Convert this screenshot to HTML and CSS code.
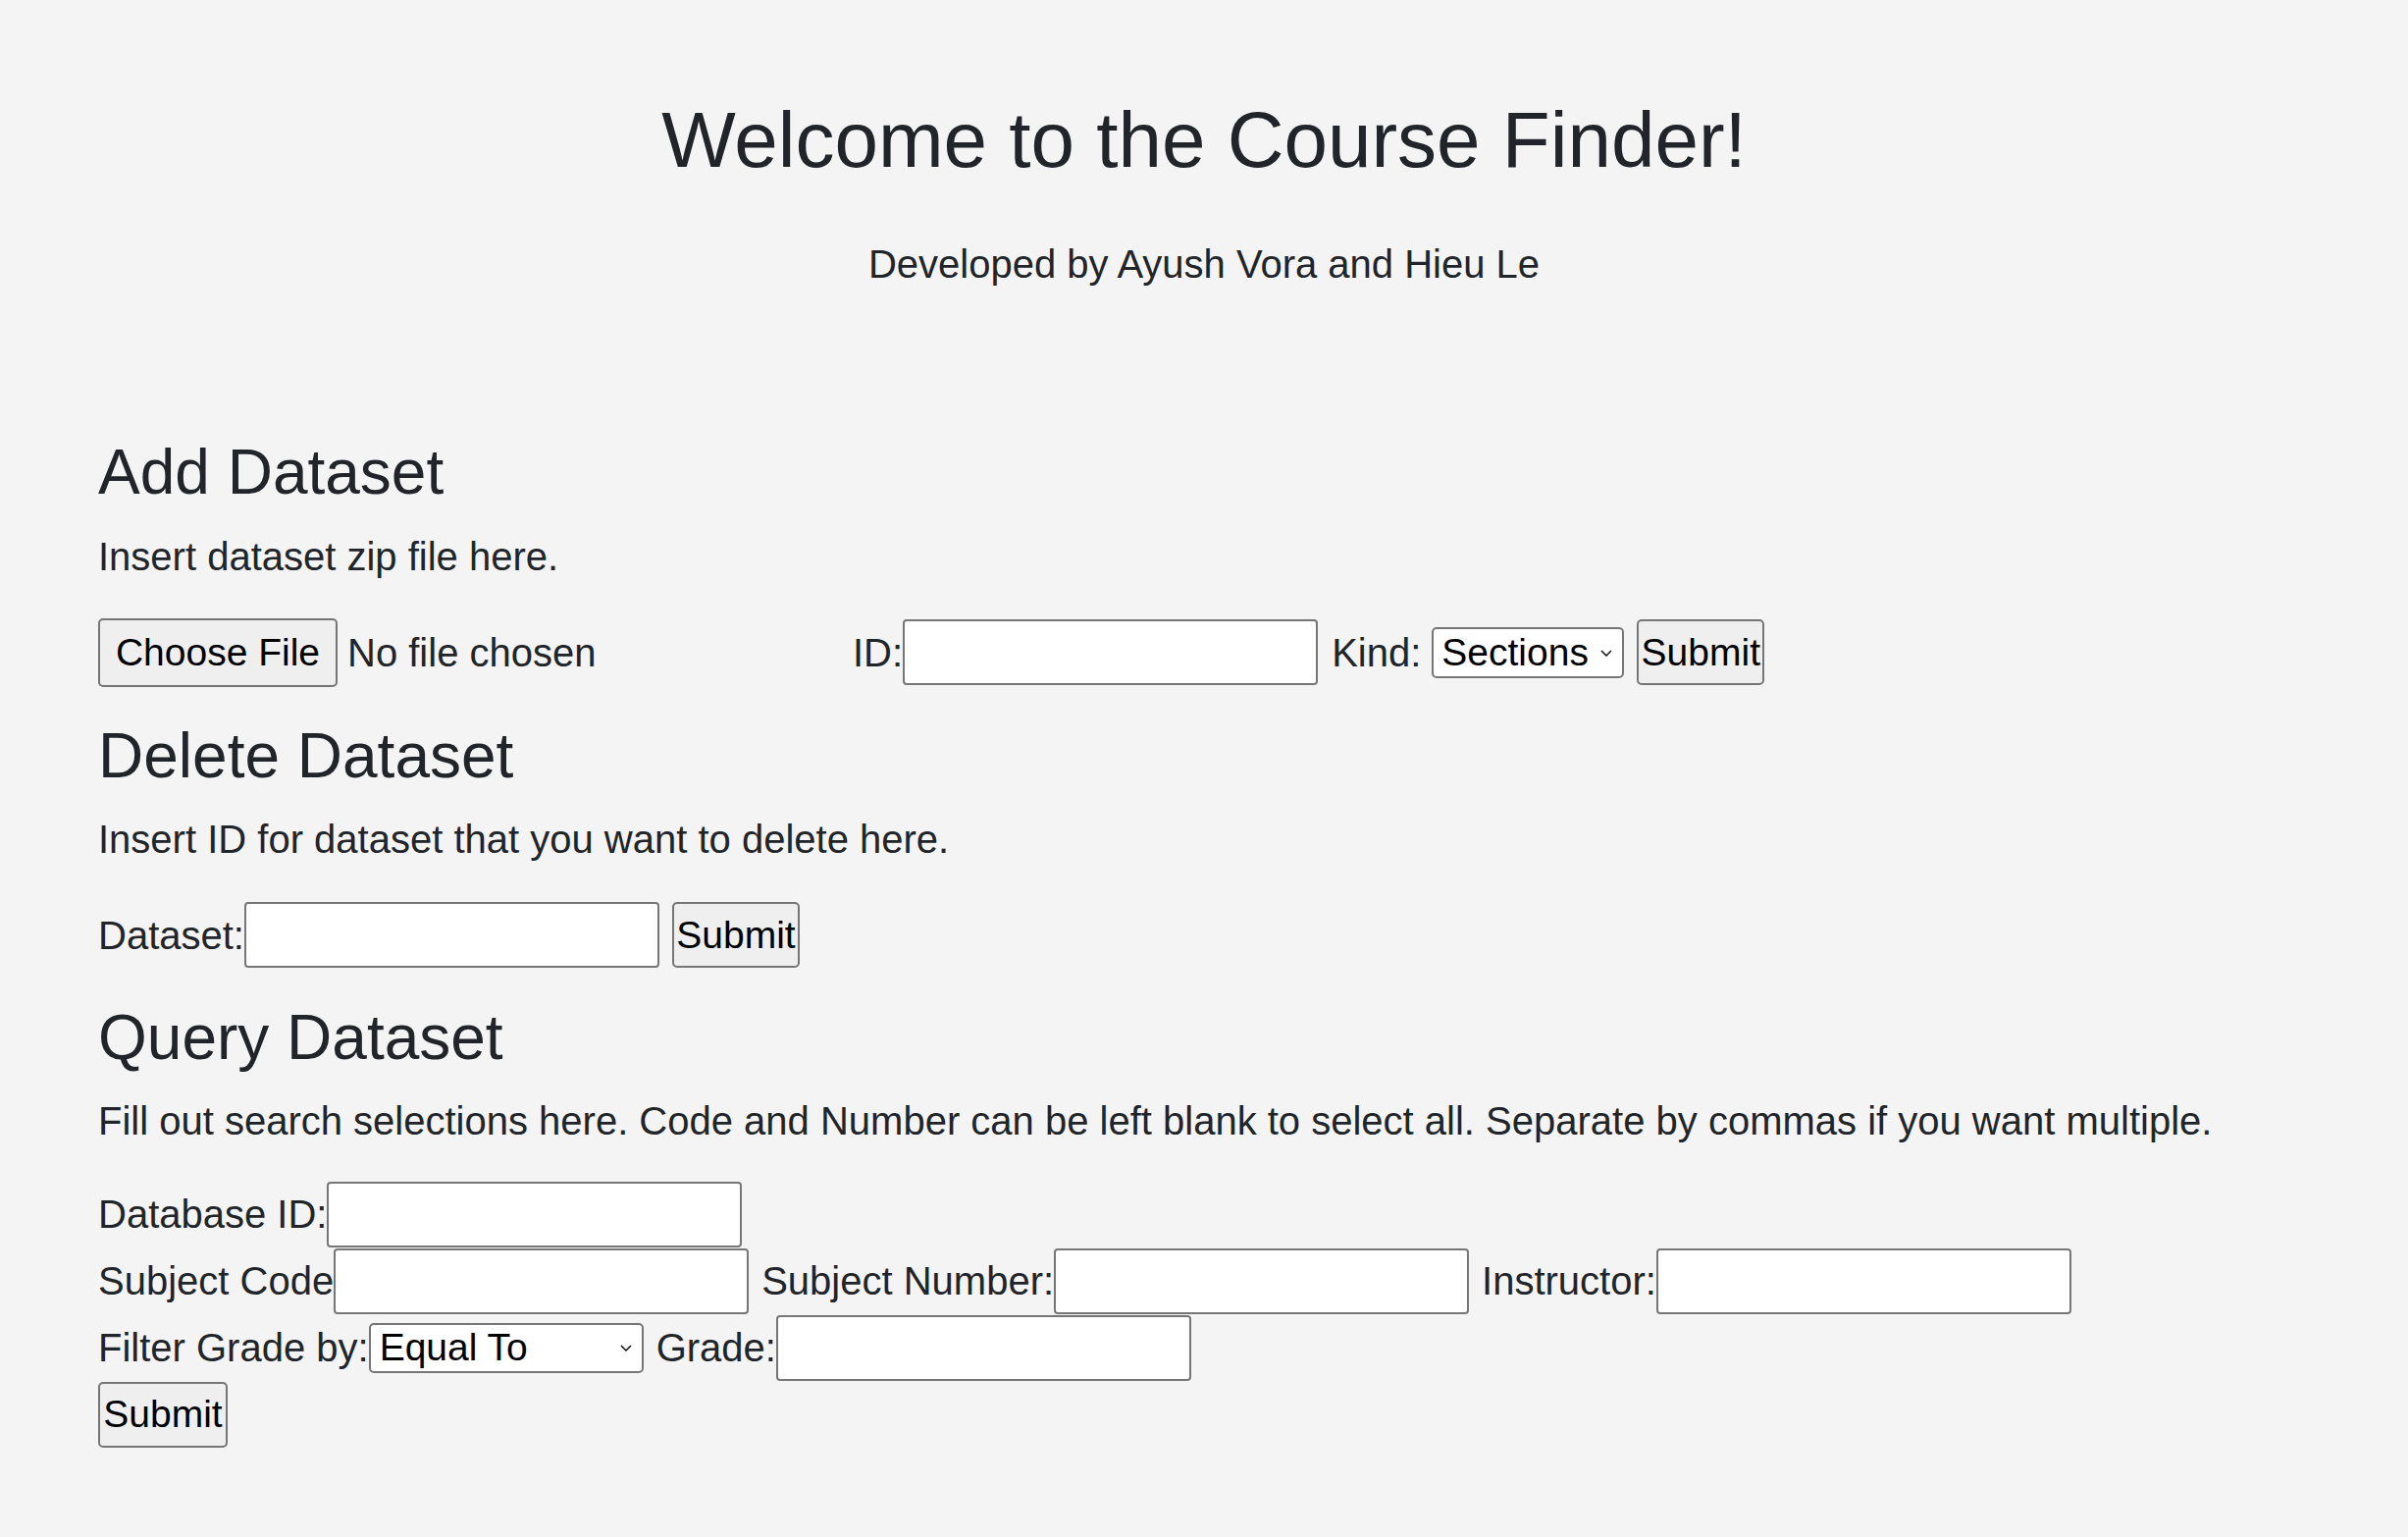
FILE: index.html
```html
<!DOCTYPE html>
<html lang="en">
<head>
<meta charset="utf-8">
<title>Course Finder</title>
<link rel="stylesheet" href="styles.css">
</head>
<body>
<header class="hero">
  <h1 class="title">Welcome to the Course Finder!</h1>
  <p class="subtitle">Developed by Ayush Vora and Hieu Le</p>
</header>
<main class="content">
  <section class="panel panel-first">
    <h2 class="panel-title">Add Dataset</h2>
    <p class="panel-desc">Insert dataset zip file here.</p>
    <form class="row">
      <div class="file-field">
        <button type="button" class="btn btn-file">Choose File</button>
        <span class="file-name">No file chosen</span>
      </div>
      <label class="lbl">ID:</label>
      <input class="txt" type="text">
      <label class="lbl lbl-gap">Kind:</label>
      <span class="select-wrap sel-kind">
        <select class="sel"><option>Sections</option><option>Rooms</option></select>
        <svg class="chev" viewBox="0 0 12 7" width="12" height="7"><polyline points="1,1 6,6 11,1" fill="none" stroke="#000" stroke-width="1.4"/></svg>
      </span>
      <button type="button" class="btn btn-submit btn-after">Submit</button>
    </form>
  </section>

  <section class="panel">
    <h2 class="panel-title">Delete Dataset</h2>
    <p class="panel-desc">Insert ID for dataset that you want to delete here.</p>
    <form class="row">
      <label class="lbl">Dataset:</label>
      <input class="txt" type="text">
      <button type="button" class="btn btn-submit btn-after">Submit</button>
    </form>
  </section>

  <section class="panel panel-last">
    <h2 class="panel-title">Query Dataset</h2>
    <p class="panel-desc">Fill out search selections here. Code and Number can be left blank to select all. Separate by commas if you want multiple.</p>
    <form class="query">
      <div class="qrow">
        <label class="lbl">Database ID:</label>
        <input class="txt" type="text">
      </div>
      <div class="qrow">
        <label class="lbl">Subject Code</label>
        <input class="txt" type="text">
        <label class="lbl lbl-next">Subject Number:</label>
        <input class="txt" type="text">
        <label class="lbl lbl-next">Instructor:</label>
        <input class="txt" type="text">
      </div>
      <div class="qrow">
        <label class="lbl">Filter Grade by:</label>
        <span class="select-wrap sel-filter">
          <select class="sel"><option>Equal To</option><option>Greater Than</option><option>Less Than</option></select>
          <svg class="chev" viewBox="0 0 12 7" width="12" height="7"><polyline points="1,1 6,6 11,1" fill="none" stroke="#000" stroke-width="1.4"/></svg>
        </span>
        <label class="lbl lbl-next">Grade:</label>
        <input class="txt" type="text">
      </div>
      <div class="qrow">
        <button type="button" class="btn btn-submit btn-query">Submit</button>
      </div>
    </form>
  </section>
</main>
</body>
</html>
```

FILE: styles.css
```css
html, body {
  margin: 0;
  padding: 0;
  background: #f4f4f4;
}

body {
  font-family: "Liberation Sans", Arial, Helvetica, sans-serif;
  font-size: 40px;
  line-height: 48px;
  color: #212529;
  padding: 0 100px;
}

.hero {
  text-align: center;
}

.title {
  margin: 95px 0 0;
  font-size: 80px;
  line-height: 96px;
  font-weight: 400;
}

.subtitle {
  margin: 54px 0 0;
  font-size: 40px;
  line-height: 48px;
}

.content {
  display: flex;
  flex-direction: column;
}

.panel-title {
  margin: 32px 0 0;
  font-size: 64px;
  line-height: 77px;
  font-weight: 400;
}

.panel-first .panel-title {
  margin-top: 150px;
}

.panel-last .panel-title {
  margin-top: 31px;
}

.panel-desc {
  margin: 22px 0 0;
  line-height: 48px;
}

.panel-first .panel-desc {
  margin-top: 23px;
}

.row {
  display: flex;
  align-items: center;
  height: 71px;
  margin: 38px 0 0;
}

.query {
  margin: 37px 0 0;
  display: flex;
  flex-direction: column;
}

.qrow {
  display: flex;
  align-items: center;
  height: 68px;
}

.lbl {
  white-space: pre;
  line-height: 48px;
}

.lbl-gap {
  margin-left: 14px;
  margin-right: 11px;
}

.lbl-next {
  margin-left: 13px;
}

.file-field {
  display: flex;
  align-items: center;
  width: 769px;
  flex: none;
}

.file-name {
  margin-left: 10px;
  white-space: nowrap;
}

.btn {
  font-family: "Liberation Sans", Arial, Helvetica, sans-serif;
  font-size: 39px;
  line-height: 46px;
  color: #000;
  background: #efefef;
  border: 2px solid #767676;
  border-radius: 5px;
  box-sizing: border-box;
  padding: 0;
  margin: 0;
  flex: none;
  white-space: nowrap;
  text-align: center;
}

.btn-file {
  width: 244px;
  height: 70px;
}

.btn-submit {
  width: 130px;
  height: 67px;
}

.btn-after {
  margin-left: 13px;
}

.btn-query {
  width: 132px;
}

.txt {
  width: 423px;
  height: 67px;
  box-sizing: border-box;
  border: 2px solid #767676;
  border-radius: 4px;
  background: #fff;
  padding: 0 6px;
  margin: 0;
  font-family: "Liberation Sans", Arial, Helvetica, sans-serif;
  font-size: 40px;
  color: #000;
  flex: none;
}

.select-wrap {
  position: relative;
  display: inline-flex;
  flex: none;
}

.sel {
  appearance: none;
  -webkit-appearance: none;
  box-sizing: border-box;
  height: 52px;
  border: 2px solid #767676;
  border-radius: 5px;
  background: #fff;
  color: #000;
  font-family: "Liberation Sans", Arial, Helvetica, sans-serif;
  font-size: 39px;
  line-height: 46px;
  padding: 0 30px 0 8px;
  margin: 0;
}

.sel-kind .sel {
  width: 196px;
}

.sel-filter .sel {
  width: 280px;
  height: 51px;
  padding-left: 9px;
}

.chev {
  position: absolute;
  right: 12px;
  top: 50%;
  margin-top: -3px;
  pointer-events: none;
}
```
